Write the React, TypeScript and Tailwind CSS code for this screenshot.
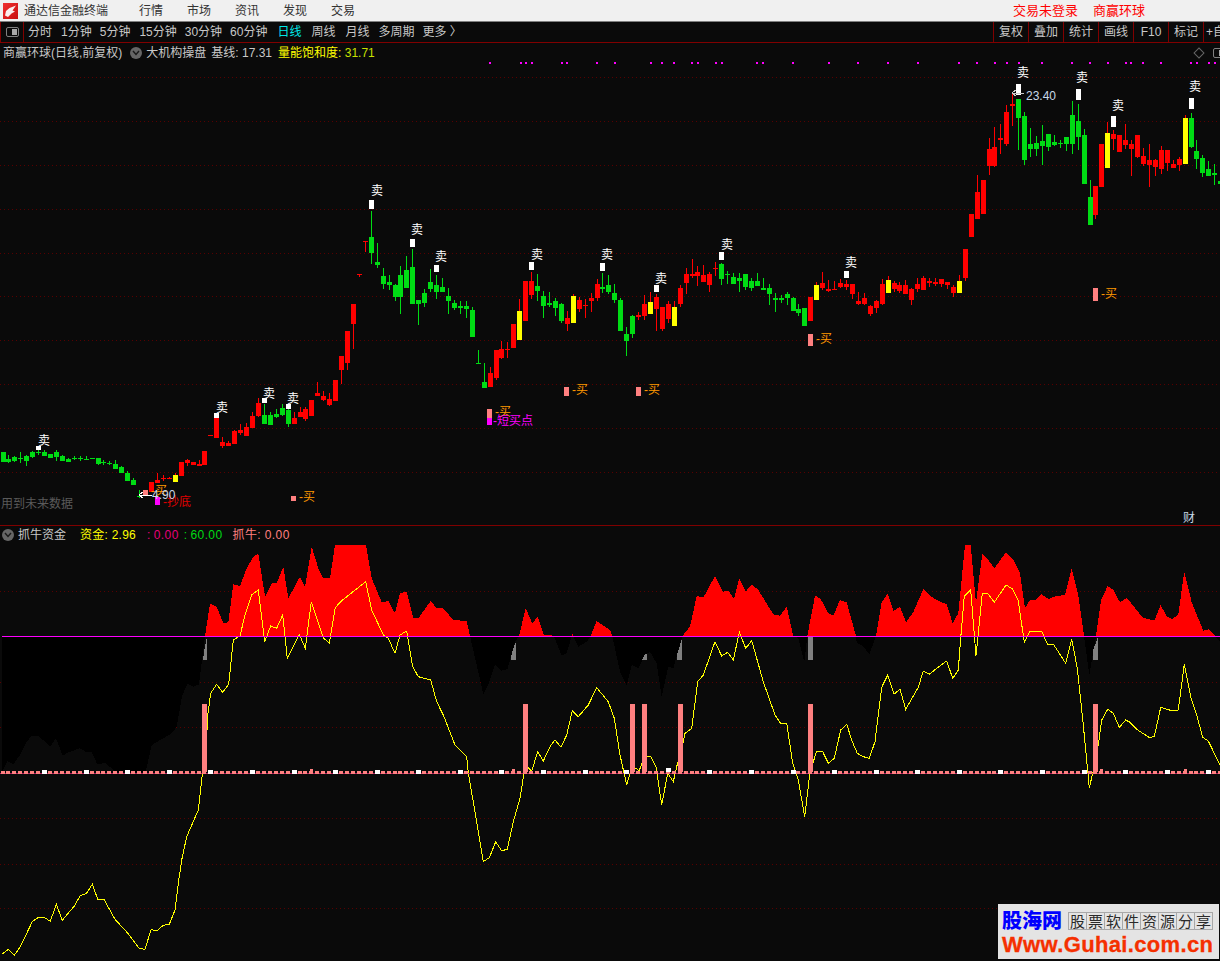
import React from 'react';

type Candle = [number, number, number, number, string] | null;

const FONT = "font-['Liberation_Sans','Noto_Sans_CJK_SC',sans-serif]";
const STEP = 5.94;
const cx = (i: number) => Math.round(2.5 + STEP * i);

// top, bottom, wick top, wick bottom, colour (pixel rows of the chart)
const candles: Candle[] = [
  [452, 462, 452, 462, 'g'], [459, 462, 455, 463, 'g'], [457, 461, 456, 462, 'g'], [458, 459, 452, 463, 'g'],
  [456, 461, 455, 466, 'g'], [452, 457, 451, 458, 'g'], [452, 453, 449, 455, 'g'], [452, 456, 450, 456, 'g'],
  [454, 458, 454, 458, 'g'], [452, 457, 450, 461, 'g'], [456, 461, 455, 461, 'g'], [459, 462, 458, 462, 'g'],
  [458, 459, 456, 460, 'g'], [458, 459, 456, 461, 'g'], [459, 460, 456, 460, 'g'], [458, 459, 458, 459, 'g'],
  [458, 464, 458, 465, 'g'], [462, 463, 460, 465, 'g'], [463, 464, 461, 465, 'g'], [464, 469, 460, 469, 'g'],
  [467, 473, 466, 473, 'g'], [473, 481, 471, 481, 'g'], [480, 485, 478, 485, 'g'], [496, 497, 490, 498, 'g'],
  null, [482, 492, 482, 492, 'r'], [480, 483, 473, 483, 'r'], [478, 479, 475, 481, 'r'],
  [478, 479, 477, 479, 'r'], [475, 482, 473, 482, 'y'], [462, 476, 462, 476, 'r'], [460, 463, 459, 466, 'r'],
  [462, 465, 462, 465, 'r'], [464, 466, 460, 466, 'r'], [451, 465, 451, 465, 'r'], [435, 436, 435, 436, 'r'],
  [418, 438, 418, 438, 'r'], [442, 446, 437, 448, 'r'], [443, 446, 441, 446, 'r'], [431, 444, 430, 444, 'r'],
  [430, 433, 424, 435, 'r'], [427, 436, 423, 436, 'r'], [416, 428, 412, 428, 'r'], [403, 416, 398, 417, 'r'],
  [415, 424, 404, 424, 'g'], [415, 425, 412, 425, 'g'], [414, 417, 409, 418, 'g'], [408, 415, 404, 416, 'g'],
  [410, 424, 404, 427, 'g'], [418, 424, 412, 424, 'r'], [412, 417, 407, 417, 'r'], [409, 419, 407, 421, 'r'],
  [400, 416, 400, 416, 'r'], [393, 396, 382, 396, 'r'], [396, 400, 391, 401, 'r'], [399, 405, 393, 406, 'r'],
  [380, 401, 380, 401, 'r'], [356, 370, 356, 384, 'r'], [331, 363, 331, 370, 'r'], [304, 324, 304, 349, 'r'],
  [274, 275, 274, 277, 'r'], [241, 242, 241, 252, 'r'], [237, 253, 211, 264, 'g'], [262, 265, 243, 268, 'g'],
  [276, 284, 268, 289, 'g'], [282, 285, 275, 290, 'g'], [285, 297, 284, 301, 'g'], [275, 297, 266, 314, 'g'],
  [270, 288, 256, 288, 'g'], [267, 304, 249, 304, 'g'], [300, 304, 300, 325, 'g'], [293, 303, 289, 307, 'g'],
  [282, 289, 269, 292, 'g'], [285, 292, 275, 299, 'g'], [287, 292, 278, 292, 'g'], [296, 301, 288, 314, 'g'],
  [303, 308, 300, 310, 'g'], [306, 308, 301, 314, 'g'], [306, 309, 301, 318, 'g'], [310, 337, 307, 337, 'g'],
  [363, 364, 350, 364, 'g'], [382, 388, 363, 388, 'g'], [373, 387, 367, 387, 'r'], [350, 378, 350, 380, 'r'],
  [349, 358, 341, 359, 'r'], [349, 350, 342, 358, 'r'], [324, 348, 324, 348, 'r'], [311, 340, 299, 340, 'y'],
  [281, 321, 281, 321, 'r'], [281, 295, 272, 299, 'r'], [286, 291, 274, 301, 'g'], [296, 306, 291, 318, 'g'],
  [303, 305, 292, 307, 'g'], [301, 308, 298, 316, 'g'], [304, 321, 303, 323, 'g'], [318, 324, 311, 331, 'r'],
  [296, 323, 294, 323, 'y'], [300, 309, 297, 312, 'r'], [305, 306, 299, 318, 'r'], [298, 301, 293, 312, 'r'],
  [284, 298, 279, 301, 'r'], [287, 289, 273, 293, 'g'], [285, 292, 275, 294, 'g'], [293, 300, 284, 303, 'g'],
  [300, 331, 298, 331, 'g'], [334, 341, 327, 356, 'g'], [316, 334, 315, 338, 'g'], [315, 317, 312, 320, 'r'],
  [304, 316, 295, 320, 'r'], [302, 314, 292, 314, 'y'], [297, 309, 294, 331, 'r'], [307, 329, 307, 331, 'r'],
  [304, 319, 301, 323, 'r'], [307, 326, 301, 326, 'y'], [288, 304, 285, 307, 'r'], [274, 283, 268, 294, 'r'],
  [274, 276, 259, 278, 'r'], [272, 276, 266, 286, 'r'], [275, 282, 265, 282, 'r'], [274, 285, 272, 292, 'r'],
  [268, 269, 262, 276, 'r'], [264, 279, 263, 285, 'g'], [274, 275, 271, 284, 'g'], [277, 284, 273, 284, 'g'],
  [278, 281, 273, 292, 'g'], [274, 287, 274, 290, 'g'], [281, 288, 278, 291, 'g'], [281, 286, 273, 286, 'g'],
  [288, 290, 278, 290, 'g'], [288, 294, 284, 305, 'g'], [298, 300, 293, 312, 'g'], [298, 300, 295, 303, 'g'],
  [294, 298, 292, 305, 'g'], [298, 311, 297, 311, 'g'], [309, 313, 304, 316, 'g'], [308, 326, 308, 326, 'g'],
  [297, 321, 297, 321, 'r'], [285, 300, 282, 300, 'y'], [283, 288, 272, 290, 'r'], [289, 291, 280, 292, 'r'],
  [289, 290, 281, 290, 'r'], [283, 287, 279, 288, 'r'], [284, 287, 280, 290, 'r'], [284, 294, 284, 299, 'r'],
  [301, 304, 292, 305, 'r'], [298, 304, 293, 305, 'r'], [306, 314, 305, 316, 'r'], [301, 308, 300, 313, 'r'],
  [284, 304, 279, 305, 'r'], [280, 293, 276, 293, 'y'], [283, 289, 281, 292, 'r'], [285, 291, 282, 293, 'r'],
  [285, 294, 280, 294, 'r'], [289, 300, 288, 305, 'r'], [284, 289, 278, 292, 'r'], [278, 290, 276, 290, 'r'],
  [281, 283, 278, 287, 'r'], [282, 284, 278, 286, 'r'], [279, 284, 279, 287, 'r'], [282, 285, 282, 289, 'r'],
  [287, 293, 285, 297, 'r'], [281, 293, 275, 293, 'y'], [249, 278, 249, 281, 'r'], [214, 237, 214, 237, 'r'],
  [192, 219, 175, 219, 'r'], [180, 214, 180, 214, 'r'], [149, 166, 138, 175, 'r'], [147, 166, 127, 167, 'r'],
  [138, 140, 124, 154, 'r'], [112, 144, 105, 146, 'r'], [104, 106, 94, 126, 'r'], [99, 118, 99, 150, 'g'],
  [116, 160, 112, 165, 'g'], [144, 149, 128, 157, 'g'], [143, 149, 136, 156, 'g'], [141, 146, 125, 165, 'g'],
  [134, 147, 134, 151, 'g'], [142, 145, 135, 146, 'g'], [143, 144, 140, 148, 'g'], [137, 144, 137, 151, 'g'],
  [115, 144, 101, 154, 'g'], [121, 137, 104, 150, 'g'], [135, 184, 129, 184, 'g'], [197, 225, 180, 225, 'g'],
  [186, 215, 186, 219, 'r'], [144, 187, 144, 187, 'r'], [133, 168, 122, 168, 'y'], [134, 139, 130, 150, 'r'],
  [135, 152, 135, 152, 'r'], [140, 145, 124, 149, 'r'], [144, 149, 140, 176, 'r'], [135, 157, 135, 158, 'r'],
  [156, 164, 148, 166, 'r'], [160, 165, 144, 187, 'r'], [160, 167, 159, 176, 'r'], [150, 169, 146, 174, 'r'],
  [150, 163, 150, 171, 'r'], [164, 168, 160, 168, 'r'], [159, 165, 157, 171, 'r'], [118, 164, 115, 164, 'y'],
  [118, 147, 113, 148, 'g'], [151, 159, 140, 169, 'g'], [158, 173, 155, 177, 'g'], [169, 176, 161, 176, 'g'],
  [173, 175, 164, 185, 'g'], [181, 184, 181, 184, 'g'],
];

const bodyColor: Record<string, string> = { r: '#ff0000', g: '#00dc14', y: '#ffff00' };
const wickColor: Record<string, string> = { r: '#ff0000', g: '#00dc14', y: '#ff0000' };

// candle index, marker top, marker bottom, label x, label y
const sells = [
  [6, 446, 450, 44, 441], [36, 413, 418, 222, 408], [44, 398, 403, 269, 394], [48, 404, 409, 293, 399],
  [62, 200, 209, 377, 191], [69, 239, 247, 417, 230], [73, 265, 272, 441, 257], [89, 262, 270, 537, 255],
  [101, 263, 271, 607, 255], [110, 285, 292, 661, 279], [121, 252, 260, 727, 245], [142, 271, 278, 851, 263],
  [171, 84, 95, 1023, 73], [181, 89, 100, 1082, 78], [187, 116, 127, 1118, 106], [200, 98, 109, 1195, 87],
];

// marker x, top, bottom, text x, text y
const buys = [
  [564, 387, 396, 572, 390], [636, 387, 396, 644, 390], [808, 334, 346, 816, 339],
  [1093, 288, 301, 1101, 294], [291, 496, 501, 299, 497], [487, 409, 418, 495, 412], [143, 490, 495, 151, 491],
];

const magentaDots = [
  489, 520, 525, 531, 561, 566, 596, 614, 650, 661, 673, 691, 697, 715, 721, 756, 762, 792, 828, 857, 887, 917, 958,
  976, 994, 1006, 1018, 1041, 1071, 1089, 1107, 1125, 1130, 1142, 1160, 1190, 1196, 1208, 1214,
];

const mainGrid = [77, 121, 165, 209, 253, 296, 340, 384, 428, 472];
const subGrid = [591, 682, 727, 818, 864, 908];
const pinkBars = [34, 88, 106, 108, 114, 136, 184];

// points were read off 3x crops, so they go through this helper
const scale = (ox: number, oy: number, pts: number[][]) => pts.map(([x, y]) => [ox + x / 3, oy + y / 3]);
const toPoints = (pts: number[][]) => pts.map(([x, y]) => `${x.toFixed(1)},${y.toFixed(1)}`).join(' ');

const area = [
  ...scale(0, 525, [
    [6, 741], [22, 708], [40, 718], [60, 690], [80, 650], [95, 633], [115, 633], [135, 650], [150, 665], [168, 640],
    [188, 692], [205, 682], [240, 670], [260, 682], [275, 680], [292, 718], [315, 714], [335, 730], [345, 741],
    [437, 741], [455, 660], [490, 640], [515, 625], [530, 605], [547, 510], [563, 477], [580, 485], [597, 478],
    [615, 333], [630, 235], [650, 245], [670, 295], [685, 292], [700, 178], [720, 183], [740, 130], [760, 95],
    [775, 85], [795, 215], [815, 175], [830, 175], [850, 125], [865, 220], [900, 155], [915, 185], [935, 65],
    [955, 130], [970, 160], [990, 160], [1005, 60], [1098, 60], [1115, 160], [1145, 232], [1165, 228], [1185, 265],
  ]),
  ...scale(400, 525, [
    [0, 205], [20, 200], [40, 280], [55, 280], [92, 228], [110, 250], [130, 250], [160, 285], [200, 288], [210, 333],
    [250, 507], [265, 480], [285, 418], [305, 437], [322, 433], [345, 352], [357, 333], [377, 250], [397, 295],
    [413, 275], [432, 330], [452, 330], [462, 335], [485, 392], [500, 385], [517, 327], [535, 365], [560, 350],
    [572, 333], [590, 288], [630, 315], [637, 333], [660, 440], [680, 480], [695, 420], [715, 430], [735, 390],
    [750, 380], [770, 415], [785, 515], [805, 425], [820, 430], [845, 340], [847, 333], [870, 305], [890, 213],
    [910, 218], [945, 153], [968, 200], [985, 197], [1002, 222], [1018, 160], [1037, 200], [1055, 178], [1075, 195],
    [1120, 268], [1140, 272], [1160, 245], [1180, 333], [1195, 340], [1213, 412], [1222, 333], [1245, 212],
  ]),
  ...scale(820, 525, [
    [0, 220], [10, 235], [25, 265], [40, 272], [60, 225], [80, 232], [108, 333], [110, 352], [130, 365], [148, 388],
    [168, 333], [185, 232], [203, 205], [220, 258], [240, 245], [258, 292], [280, 262], [310, 192], [330, 213],
    [360, 230], [380, 238], [398, 295], [415, 265], [435, 60], [452, 60], [468, 235], [487, 85], [505, 105],
    [523, 130], [558, 82], [580, 105], [600, 145], [615, 250], [630, 225], [645, 225], [665, 208], [685, 222],
    [710, 213], [735, 210], [755, 130], [775, 210], [792, 333], [808, 450], [828, 333], [843, 225], [863, 183],
    [880, 195], [900, 232], [920, 218], [968, 278], [1003, 287], [1022, 240], [1040, 275], [1058, 282], [1075, 268],
    [1093, 140], [1115, 232], [1150, 317], [1165, 313], [1185, 333], [1200, 350],
  ]),
];
const areaPolygon = toPoints([[2, 636], ...area, [1220, 636]]);

const grayShapes = [
  scale(0, 525, [[609, 405], [621, 405], [621, 336], [612, 380]]),
  scale(400, 525, [[333, 405], [348, 405], [348, 350], [340, 370], [333, 395]]),
  scale(400, 525, [[727, 405], [741, 405], [741, 385], [733, 390]]),
  scale(400, 525, [[831, 405], [846, 405], [846, 340], [831, 390]]),
  scale(400, 525, [[1225, 405], [1239, 405], [1239, 336], [1225, 336]]),
  scale(820, 525, [[819, 405], [834, 405], [834, 336], [825, 360], [819, 375]]),
];

const yellowLine = toPoints([
  ...scale(0, 780, [
    [7, 522], [25, 508], [43, 526], [61, 500], [97, 425], [115, 412], [133, 412], [151, 424], [169, 373], [187, 421],
    [223, 378], [241, 347], [259, 341], [277, 313], [293, 357], [311, 357], [345, 418], [381, 457], [417, 505],
    [435, 508], [453, 449], [471, 452], [490, 436], [508, 433], [525, 390], [535, 310], [545, 240], [560, 170],
    [595, 90], [605, 0],
  ]),
  ...scale(0, 525, [
    [606, 755], [622, 608], [622, 580], [632, 505], [650, 478], [668, 502], [686, 478], [700, 345], [720, 333],
    [735, 270], [755, 210], [775, 195], [794, 350], [812, 303], [830, 310], [848, 270], [862, 400], [898, 328],
    [916, 370], [934, 230], [970, 338], [988, 355], [1006, 248], [1024, 228], [1097, 170], [1115, 255], [1150, 330],
    [1165, 340], [1185, 385],
  ]),
  ...scale(400, 525, [
    [0, 330], [20, 318], [38, 425], [55, 455], [92, 465], [110, 530], [130, 570], [165, 660], [200, 695], [205, 745],
    [225, 860], [250, 1010], [268, 998], [287, 950], [305, 977], [322, 973], [340, 890], [360, 820], [372, 745],
    [385, 728], [395, 738], [413, 680], [430, 708], [450, 665], [465, 645], [483, 667], [500, 630], [517, 557],
    [535, 575], [565, 540], [590, 488], [625, 530], [643, 580], [660, 690], [680, 780], [690, 745], [708, 730],
    [717, 738], [725, 718], [733, 695], [752, 693], [768, 725], [785, 840], [803, 745], [820, 770], [830, 725],
    [848, 660], [855, 625], [875, 610], [893, 470], [910, 450], [945, 350], [965, 393], [983, 382], [1000, 405],
    [1018, 322], [1037, 370], [1055, 347], [1090, 470], [1125, 570], [1143, 597], [1160, 595], [1178, 715],
    [1195, 765], [1214, 875], [1230, 740], [1240, 710], [1250, 678],
  ]),
  ...scale(820, 525, [
    [0, 678], [8, 680], [25, 715], [43, 700], [62, 615], [80, 598], [97, 650], [112, 685], [130, 695], [148, 700],
    [165, 650], [185, 487], [203, 450], [222, 508], [240, 492], [257, 553], [295, 487], [310, 438], [328, 448],
    [350, 430], [380, 408], [398, 460], [415, 435], [422, 340], [433, 213], [452, 195], [468, 392], [487, 205],
    [505, 207], [523, 232], [558, 180], [578, 192], [595, 228], [613, 352], [630, 318], [665, 318], [682, 357],
    [700, 357], [737, 415], [755, 342], [772, 430], [790, 600], [808, 788], [818, 745], [835, 660], [845, 585],
    [863, 553], [880, 565], [898, 607], [917, 585], [930, 592], [953, 615], [987, 637], [1003, 635], [1022, 547],
    [1058, 558], [1075, 555], [1093, 418], [1112, 515], [1130, 570], [1148, 637], [1165, 648], [1200, 720],
  ]),
]);

const periods = [
  { label: '分时', cls: '' },
  { label: '1分钟', cls: 'ml-[9px]' },
  { label: '5分钟', cls: 'ml-[8px]' },
  { label: '15分钟', cls: 'ml-[9px]' },
  { label: '30分钟', cls: 'ml-[8px]' },
  { label: '60分钟', cls: 'ml-[8px]' },
  { label: '日线', cls: 'ml-[10px] text-[#00e8e8]' },
  { label: '周线', cls: 'ml-[10px]' },
  { label: '月线', cls: 'ml-[10px]' },
  { label: '多周期', cls: 'ml-[9px]' },
  { label: '更多 〉', cls: 'ml-[8px]' },
];
const tools = ['复权', '叠加', '统计', '画线', 'F10', '标记'];

const RoundChevron = () => (
  <div className="flex h-3 w-3 shrink-0 items-center justify-center rounded-full bg-[#666666]">
    <svg width="8" height="6" viewBox="0 0 8 6">
      <path d="M1 1 L4 4.5 L7 1" fill="none" stroke="#1a1a1a" strokeWidth="1.4" />
    </svg>
  </div>
);

const PanelToggle = () => (
  <div className="flex h-[10px] w-[13px] shrink-0 rounded-[2px] border border-[#808080] p-px">
    <div className="ml-auto w-[5px] bg-[#a8a8a8]" />
  </div>
);

const Logo = () => (
  <svg width="15" height="16" viewBox="0 0 15 16" className="shrink-0">
    <defs>
      <linearGradient id="logoRed" x1="0" y1="0" x2="1" y2="1">
        <stop offset="0" stopColor="#f03030" />
        <stop offset="1" stopColor="#c80f0f" />
      </linearGradient>
    </defs>
    <rect width="15" height="16" fill="url(#logoRed)" />
    <path d="M13 2.5 L6.5 5 L3 8 L2 12.5 L5 14 L8.5 10.5 L12 8.5 L9.5 7.5 Z" fill="#fbeeee" />
  </svg>
);

// text floating on the chart canvas, y is the vertical centre
const ChartLabel = ({ x, y, oy, className, children }: { x: number; y: number; oy: number; className: string; children: React.ReactNode }) => (
  <span className={`absolute whitespace-nowrap text-[12px] leading-[14px] ${className}`} style={{ left: x, top: y - oy - 7 }}>
    {children}
  </span>
);

const MainChart = () => (
  <div className="relative h-[483px] shrink-0 border-b border-[#800000]">
    <svg className="absolute left-0 top-0" width="1220" height="482" viewBox="0 43 1220 482" shapeRendering="crispEdges">
      {mainGrid.map((y) => (
        <line key={y} x1="0" x2="1220" y1={y + 0.5} y2={y + 0.5} stroke="#580000" strokeDasharray="1 3" />
      ))}
      {magentaDots.map((x) => (
        <rect key={x} x={x} y="62" width="2" height="2" fill="#ff00ff" />
      ))}
      {candles.map((c, i) =>
        c ? (
          <g key={i}>
            <rect x={cx(i)} y={c[2]} width="1" height={c[3] - c[2]} fill={wickColor[c[4]]} />
            <rect x={cx(i) - 2} y={c[0]} width="5" height={Math.max(1, c[1] - c[0])} fill={bodyColor[c[4]]} />
          </g>
        ) : null,
      )}
      {sells.map(([i, top, bottom]) => (
        <rect key={i} x={cx(i) - 2} y={top} width="5" height={bottom - top} fill="#ffffff" />
      ))}
      {buys.map(([x, top, bottom]) => (
        <rect key={x} x={x} y={top} width="5" height={bottom - top} fill="#ff8080" />
      ))}
      <rect x="487" y="418" width="5" height="7" fill="#ff00ff" />
      <rect x="155" y="497" width="5" height="8" fill="#ff00ff" />
      <path d="M139 495 H152 M139 495 L143 492 M139 495 L143 498" fill="none" stroke="#ffffff" />
      <path d="M1012 93 H1024 M1012 93 L1016 90 M1012 93 L1016 96" fill="none" stroke="#c8c8c8" />
    </svg>

    <div className="absolute left-0 right-0 top-0 flex h-[19px] items-center overflow-hidden pl-[3px] text-[12px] text-[#c8c8c8]">
      <span>商赢环球(日线,前复权)</span>
      <span className="ml-[8px]"><RoundChevron /></span>
      <span className="ml-[4px]">大机构操盘</span>
      <span className="ml-[5px]">基线: 17.31</span>
      <span className="ml-[6px] text-[#ffff00]">量能饱和度: <span className="text-[#c8e000]">31.71</span></span>
      <span className="ml-auto mr-[3px] h-2 w-2 rotate-45 border border-[#666666]" />
      <span className="ml-[7px] mr-[-6px]"><PanelToggle /></span>
    </div>

    {sells.map(([i, , , x, y]) => (
      <ChartLabel key={i} x={x - 6} y={y} oy={43} className="text-white">卖</ChartLabel>
    ))}
    {buys.map(([x, , , tx, ty]) => (
      <ChartLabel key={x} x={tx} y={ty} oy={43} className="text-[#ff9900]">-买</ChartLabel>
    ))}
    <ChartLabel x={493} y={421} oy={43} className="text-[#ff00ff]">-短买点</ChartLabel>
    <ChartLabel x={163} y={502} oy={43} className="text-[#e00000]">-抄底</ChartLabel>
    <ChartLabel x={152} y={495} oy={43} className="text-[#c8d8e8]">4.90</ChartLabel>
    <ChartLabel x={1026} y={96} oy={43} className="text-[#c8d8e8]">23.40</ChartLabel>
    <ChartLabel x={1} y={504} oy={43} className="text-[#5a5a5a]">用到未来数据</ChartLabel>
    <ChartLabel x={1183} y={518} oy={43} className="text-[#c8d8e8]">财</ChartLabel>
  </div>
);

const SubChart = () => (
  <div className="relative h-[435px] shrink-0">
    <svg className="absolute left-0 top-0" width="1220" height="435" viewBox="0 526 1220 435" shapeRendering="crispEdges">
      <defs>
        <clipPath id="above"><rect x="0" y="526" width="1220" height="110" /></clipPath>
        <clipPath id="below"><rect x="0" y="636" width="1220" height="325" /></clipPath>
      </defs>
      {subGrid.map((y) => (
        <line key={y} x1="0" x2="1220" y1={y + 0.5} y2={y + 0.5} stroke="#580000" strokeDasharray="1 3" />
      ))}
      <polygon points={areaPolygon} fill="#000000" clipPath="url(#below)" />
      <polygon points={areaPolygon} fill="#ff0000" clipPath="url(#above)" />
      {grayShapes.map((s, i) => (
        <polygon key={i} points={toPoints(s)} fill="#808080" />
      ))}
      <polyline points={yellowLine} fill="none" stroke="#ffff00" strokeWidth="1" />
      <rect x="2" y="636" width="1218" height="1" fill="#ff00ff" />
      <rect x="0" y="773" width="1220" height="1" fill="#b01c60" />
      {candles.map((_, i) => (
        <rect key={i} x={cx(i) - 2} y="771" width="4" height="3" fill="#ff8080" />
      ))}
      {[52, 86, 185, 199].map((i) => (
        <rect key={i} x={cx(i) - 1} y="769" width="3" height="3" fill="#ff8080" />
      ))}
      {pinkBars.map((i) => (
        <rect key={i} x={cx(i) - 2} y="704" width="5" height="68" fill="#ff8080" />
      ))}
      {candles.map((_, i) =>
        i % 7 === 0 && i > 0 ? (
          <rect key={i} x={cx(i) - 2} y={i === 112 ? 768 : 770} width="5" height="4" fill="#ffffff" />
        ) : null,
      )}
    </svg>

    <div className="absolute left-[2px] top-[1px] flex h-[15px] items-center text-[12px]">
      <RoundChevron />
      <span className="ml-[4px] text-[#c8c8c8]">抓牛资金</span>
      <span className="ml-[14px] tracking-[0.25px] text-[#ffff00]">资金: 2.96</span>
      <span className="ml-[11px] tracking-[0.4px] text-[#e6007a]"><span className="mr-[3px]">:</span>0.00</span>
      <span className="ml-[5px] tracking-[0.4px] text-[#00dc14]"><span className="mr-[3px]">:</span>60.00</span>
      <span className="ml-[10px] tracking-[0.4px] text-[#ff8080]">抓牛: 0.00</span>
    </div>

    <div className="absolute bottom-[2px] right-[1px] flex h-[55px] w-[221px] flex-col bg-[#e4e4e4] pl-[4px] pt-[6px]">
      <div className="flex h-[22px] items-center">
        <span className="w-[66px] text-[20px] font-black leading-[22px] text-[#0000ff]">股海网</span>
        <div className="flex border-l border-t border-[#a8a8a8]">
          {['股', '票', '软', '件', '资', '源', '分', '享'].map((t) => (
            <span key={t} className="flex h-[17px] w-[18px] items-center justify-center border-b border-r border-[#a8a8a8] text-[15px] leading-none text-[#2a2a2a]">
              {t}
            </span>
          ))}
        </div>
      </div>
      <span className="mt-[2px] text-[22px] font-bold leading-[22px] tracking-[0.35px] text-[#f53000] [-webkit-text-stroke:0.3px_#f53000]">Www.Guhai.com.cn</span>
    </div>
  </div>
);

export default function App() {
  return (
    <div className={`flex h-[961px] w-[1220px] flex-col overflow-hidden bg-[#0a0a0a] ${FONT}`}>
      <header className="flex h-[22px] shrink-0 items-center border-b border-[#808080] bg-[#f0f0f0] pl-[3px] text-[12px] text-[#333333]">
        <Logo />
        <span className="ml-[6px]">通达信金融终端</span>
        <nav className="ml-[31px] flex gap-[24px]">
          {['行情', '市场', '资讯', '发现', '交易'].map((m) => (
            <span key={m}>{m}</span>
          ))}
        </nav>
        <div className="ml-auto mr-[75px] flex gap-[15px] text-[13px] text-[#ff0000]">
          <span>交易未登录</span>
          <span>商赢环球</span>
        </div>
      </header>

      <div className="flex h-[21px] shrink-0 items-stretch border-b border-[#800000] text-[12px] text-[#c8c8c8]">
        <div className="flex w-[24px] items-center justify-center border-x border-[#800000]">
          <PanelToggle />
        </div>
        <div className="ml-[4px] flex items-center">
          {periods.map((p) => (
            <span key={p.label} className={p.cls}>{p.label}</span>
          ))}
        </div>
        <div className="ml-auto flex w-[227px] overflow-hidden">
          {tools.map((t) => (
            <span key={t} className="flex w-[35px] shrink-0 items-center justify-center border-l border-[#800000]">{t}</span>
          ))}
          <span className="flex w-[17px] shrink-0 items-center overflow-hidden whitespace-nowrap border-l border-[#800000] pl-[2px]">+自</span>
        </div>
      </div>

      <MainChart />
      <SubChart />
    </div>
  );
}
